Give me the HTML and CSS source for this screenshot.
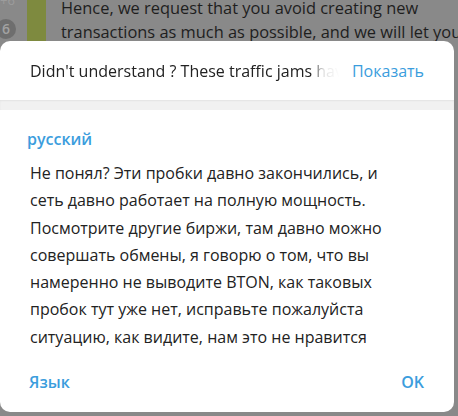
FILE: index.html
```html
<!DOCTYPE html>
<html lang="ru">
<head>
	<meta charset="UTF-8">
	<title>Перевод</title>
	<link rel="stylesheet" href="styles.css">
</head>
<body>
	<div class="chat">
		<div class="side">
			<span class="count">+6</span>
			<span class="avatar">6</span>
		</div>
		<div class="bar"></div>
		<div class="msg">
			<p>Hence, we request that you avoid creating new</p>
			<p>transactions as much as possible, and we will let you</p>
			<p>know when the network is back to full capacity.</p>
		</div>
	</div>

	<div class="box">
		<div class="original">
			<span class="orig-text">Didn't understand ? These traffic jams have long ended</span>
			<a class="show">Показать</a>
		</div>
		<div class="sep"></div>
		<div class="content">
			<h3 class="lang">русский</h3>
			<p class="text">Не понял? Эти пробки давно закончились, и сеть давно работает на полную мощность. Посмотрите другие биржи, там давно можно совершать обмены, я говорю о том, что вы намеренно не выводите BTON, как таковых пробок тут уже нет, исправьте пожалуйста ситуацию, как видите, нам это не нравится</p>
		</div>
		<div class="btns">
			<a>Язык</a>
			<a>OK</a>
		</div>
	</div>
</body>
</html>
```

FILE: styles.css
```css
*{
	margin: 0;
	padding: 0;
	box-sizing: border-box;
}
body{
	width: 458px;
	height: 416px;
	overflow: hidden;
	position: relative;
	background: #898989;
	font-family: "Open Sans", "Liberation Sans", sans-serif;
}
a{
	color: #3b9ddd;
	cursor: pointer;
}

/* чат под затемнением */
.chat{
	display: flex;
	height: 416px;
}
.side{
	flex-shrink: 0;
	display: flex;
	flex-direction: column;
	width: 27px;
}
.count{
	margin-top: -9px;
	font-size: 13px;
	color: #9c9c9c;
}
.avatar{
	margin: 10px 0 0 -4px;
	width: 20px;
	height: 20px;
	border-radius: 50%;
	background: #6e6e6e;
	color: #a2a2a2;
	font-size: 14px;
	line-height: 20px;
	text-align: center;
	font-weight: 600;
}
.bar{
	flex-shrink: 0;
	width: 19px;
	height: 60px;
	background: #7e8a3f;
}
.msg{
	padding: 0 0 0 15px;
	font-size: 16.4px;
	line-height: 24px;
	color: #1e1e1e;
	margin-top: -4px;
	white-space: nowrap;
}

/* окно перевода */
.box{
	position: absolute;
	left: 0;
	top: 41px;
	width: 454px;
	height: 371px;
	background: #fff;
	border-radius: 10px;
	display: flex;
	flex-direction: column;
}
.original{
	display: flex;
	align-items: center;
	height: 59px;
	padding: 0 30px;
	font-size: 16px;
	color: #222;
}
.orig-text{
	flex: 1;
	white-space: nowrap;
	overflow: hidden;
	-webkit-mask-image: linear-gradient(to right, #000 88%, rgba(0,0,0,.15) 92%, transparent 97%);
	mask-image: linear-gradient(to right, #000 88%, rgba(0,0,0,.15) 92%, transparent 97%);
}
.show{
	margin-left: 3px;
}
.sep{
	height: 10px;
	background: #f1f1f1;
	box-shadow: inset 0 1px 2px rgba(0,0,0,.06);
}
.content{
	flex: 1;
	padding: 17px 30px 0 30px;
}
.lang{
	margin-left: -3px;
	font-size: 16px;
	font-weight: 600;
	color: #3b9ddd;
	line-height: 24px;
}
.text{
	margin-top: 9px;
	padding-right: 20px;
	font-size: 16px;
	line-height: 27.3px;
	color: #222;
}
.btns{
	display: flex;
	justify-content: space-between;
	padding: 0 30px 20px 29px;
	font-size: 16px;
	font-weight: 600;
	line-height: 20px;
}
```
